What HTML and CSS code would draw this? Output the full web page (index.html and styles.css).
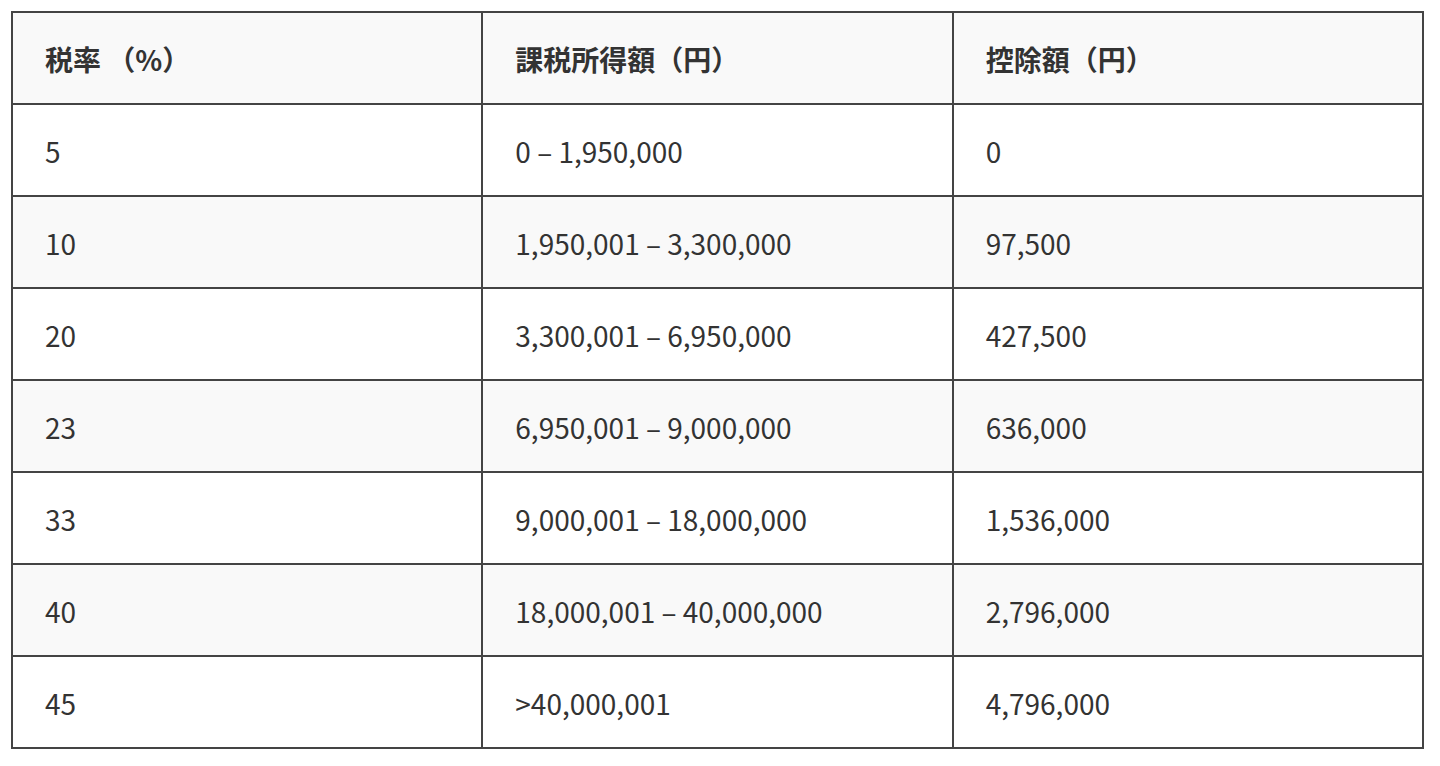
FILE: index.html
```html
<!DOCTYPE html>
<html lang="ja">
<head>
<meta charset="utf-8">
<link rel="stylesheet" href="styles.css">
</head>
<body>
<table class="tax-table">
  <thead>
    <tr><th>税率 （%）</th><th>課税所得額（円）</th><th>控除額（円）</th></tr>
  </thead>
  <tbody>
    <tr><td>5</td><td>0 – 1,950,000</td><td>0</td></tr>
    <tr><td>10</td><td>1,950,001 – 3,300,000</td><td>97,500</td></tr>
    <tr><td>20</td><td>3,300,001 – 6,950,000</td><td>427,500</td></tr>
    <tr><td>23</td><td>6,950,001 – 9,000,000</td><td>636,000</td></tr>
    <tr><td>33</td><td>9,000,001 – 18,000,000</td><td>1,536,000</td></tr>
    <tr><td>40</td><td>18,000,001 – 40,000,000</td><td>2,796,000</td></tr>
    <tr><td>45</td><td>&gt;40,000,001</td><td>4,796,000</td></tr>
  </tbody>
</table>
</body>
</html>
```
FILE: styles.css
```css
html, body {
  margin: 0;
  background: #ffffff;
}
body {
  padding: 11px 0 0 11px;
  font-family: "Noto Sans CJK JP", "Noto Sans", sans-serif;
  color: #333333;
}
.tax-table {
  border-collapse: collapse;
  table-layout: fixed;
  width: 1413px;
  font-size: 28px;
  line-height: 1.4;
}
.tax-table th,
.tax-table td {
  border: 2px solid #444444;
  padding: 3px 32px 0 32px;
  height: 92px;
  text-align: left;
  vertical-align: middle;
  box-sizing: border-box;
}
.tax-table th {
  font-weight: 700;
  background: #f9f9f9;
}
.tax-table tbody tr:nth-child(even) td {
  background: #f9f9f9;
}
```
